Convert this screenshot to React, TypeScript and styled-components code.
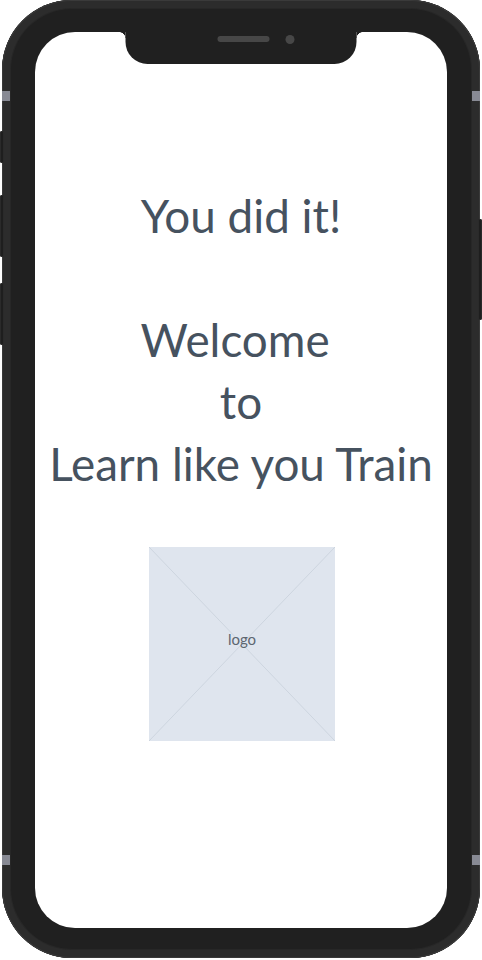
import React from "react";
import styled, { createGlobalStyle } from "styled-components";

const Global = createGlobalStyle`
  html, body { margin: 0; padding: 0; background: #ffffff; }
  body { font-family: Lato, "Open Sans", Arial, sans-serif; }
  * { box-sizing: border-box; }
`;

const Stage = styled.div`
  position: relative;
  width: 482px;
  height: 960px;
  padding: 0 2px 2px 2px;
`;

const Body = styled.div`
  position: relative;
  width: 478px;
  height: 958px;
  border-radius: 70px;
  background: #202020;
  box-shadow: inset 0 0 0 1px #3a3a3a, inset 0 0 0 8px #2c2c2c, inset 0 0 0 9px #272727;
  padding: 32px 33px 30px 33px;
`;

const Screen = styled.div`
  position: relative;
  width: 412px;
  height: 896px;
  border-radius: 40px;
  background: #ffffff;
  overflow: hidden;
  display: flex;
  flex-direction: column;
  align-items: center;
  padding-top: 153px;
`;

const Notch = styled.div`
  position: absolute;
  top: 0;
  left: 50%;
  transform: translateX(-50%);
  width: 231px;
  height: 32px;
  background: #202020;
  border-radius: 0 0 22px 22px;
  display: flex;
  align-items: flex-start;
  justify-content: center;
  gap: 16px;
  padding-left: 30px;
  padding-top: 4px;

  &::before,
  &::after {
    content: "";
    position: absolute;
    top: 0;
    width: 6px;
    height: 6px;
  }
  &::before {
    left: -6px;
    background: radial-gradient(circle at 0 100%, transparent 5.5px, #202020 6px);
  }
  &::after {
    right: -6px;
    background: radial-gradient(circle at 100% 100%, transparent 5.5px, #202020 6px);
  }
`;

const Speaker = styled.div`
  width: 52px;
  height: 6px;
  border-radius: 3px;
  background: #474747;
`;

const Camera = styled.div`
  width: 9px;
  height: 9px;
  margin-top: -1px;
  border-radius: 50%;
  background: #474747;
`;

const Heading = styled.h1`
  margin: 0;
  font-family: Lato, "Open Sans", Arial, sans-serif;
  font-weight: 400;
  font-size: 45.8px;
  line-height: 62px;
  color: #46525f;
  text-align: center;
  white-space: pre;
`;

const LogoBox = styled.div`
  position: relative;
  margin-top: 52px;
  margin-left: 2px;
  width: 186px;
  height: 194px;
  background: #dfe5ee;
  display: flex;
  align-items: center;
  justify-content: center;
`;

const Cross = styled.svg`
  position: absolute;
  inset: 0;
  width: 100%;
  height: 100%;
`;

const LogoLabel = styled.span`
  position: relative;
  font-family: Lato, "Open Sans", Arial, sans-serif;
  font-size: 15px;
  color: #5d6670;
  margin-top: -10px;
`;

const SideButton = styled.div<{ $side: "left" | "right"; $top: number; $h: number }>`
  position: absolute;
  top: ${(p) => p.$top}px;
  ${(p) => (p.$side === "left" ? "left: 0;" : "right: 0;")}
  width: 4px;
  height: ${(p) => p.$h}px;
  background: #1e1e1e;
  border-radius: ${(p) => (p.$side === "left" ? "2px 0 0 2px" : "0 2px 2px 0")};
  box-shadow: inset 0 0 0 1px #2a2a2a;
`;

const Band = styled.div<{ $side: "left" | "right"; $top: number }>`
  position: absolute;
  top: ${(p) => p.$top}px;
  ${(p) => (p.$side === "left" ? "left: 2px;" : "right: 2px;")}
  width: 8px;
  height: 10px;
  background: #888a94;
`;

export default function App() {
  return (
    <>
      <Global />
      <Stage>
        <Body>
          <Screen>
            <Notch>
              <Speaker />
              <Camera />
            </Notch>
            <Heading>{"You did it!\n\nWelcome \nto\nLearn like you Train"}</Heading>
            <LogoBox>
              <Cross viewBox="0 0 186 194" preserveAspectRatio="none">
                <line x1="0" y1="0" x2="186" y2="194" stroke="#cdd5df" strokeWidth="1" />
                <line x1="186" y1="0" x2="0" y2="194" stroke="#cdd5df" strokeWidth="1" />
              </Cross>
              <LogoLabel>logo</LogoLabel>
            </LogoBox>
          </Screen>
        </Body>
        <Band $side="left" $top={91} />
        <Band $side="left" $top={855} />
        <Band $side="right" $top={91} />
        <Band $side="right" $top={855} />
        <SideButton $side="left" $top={131} $h={32} />
        <SideButton $side="left" $top={195} $h={62} />
        <SideButton $side="left" $top={283} $h={62} />
        <SideButton $side="right" $top={219} $h={101} />
      </Stage>
    </>
  );
}
